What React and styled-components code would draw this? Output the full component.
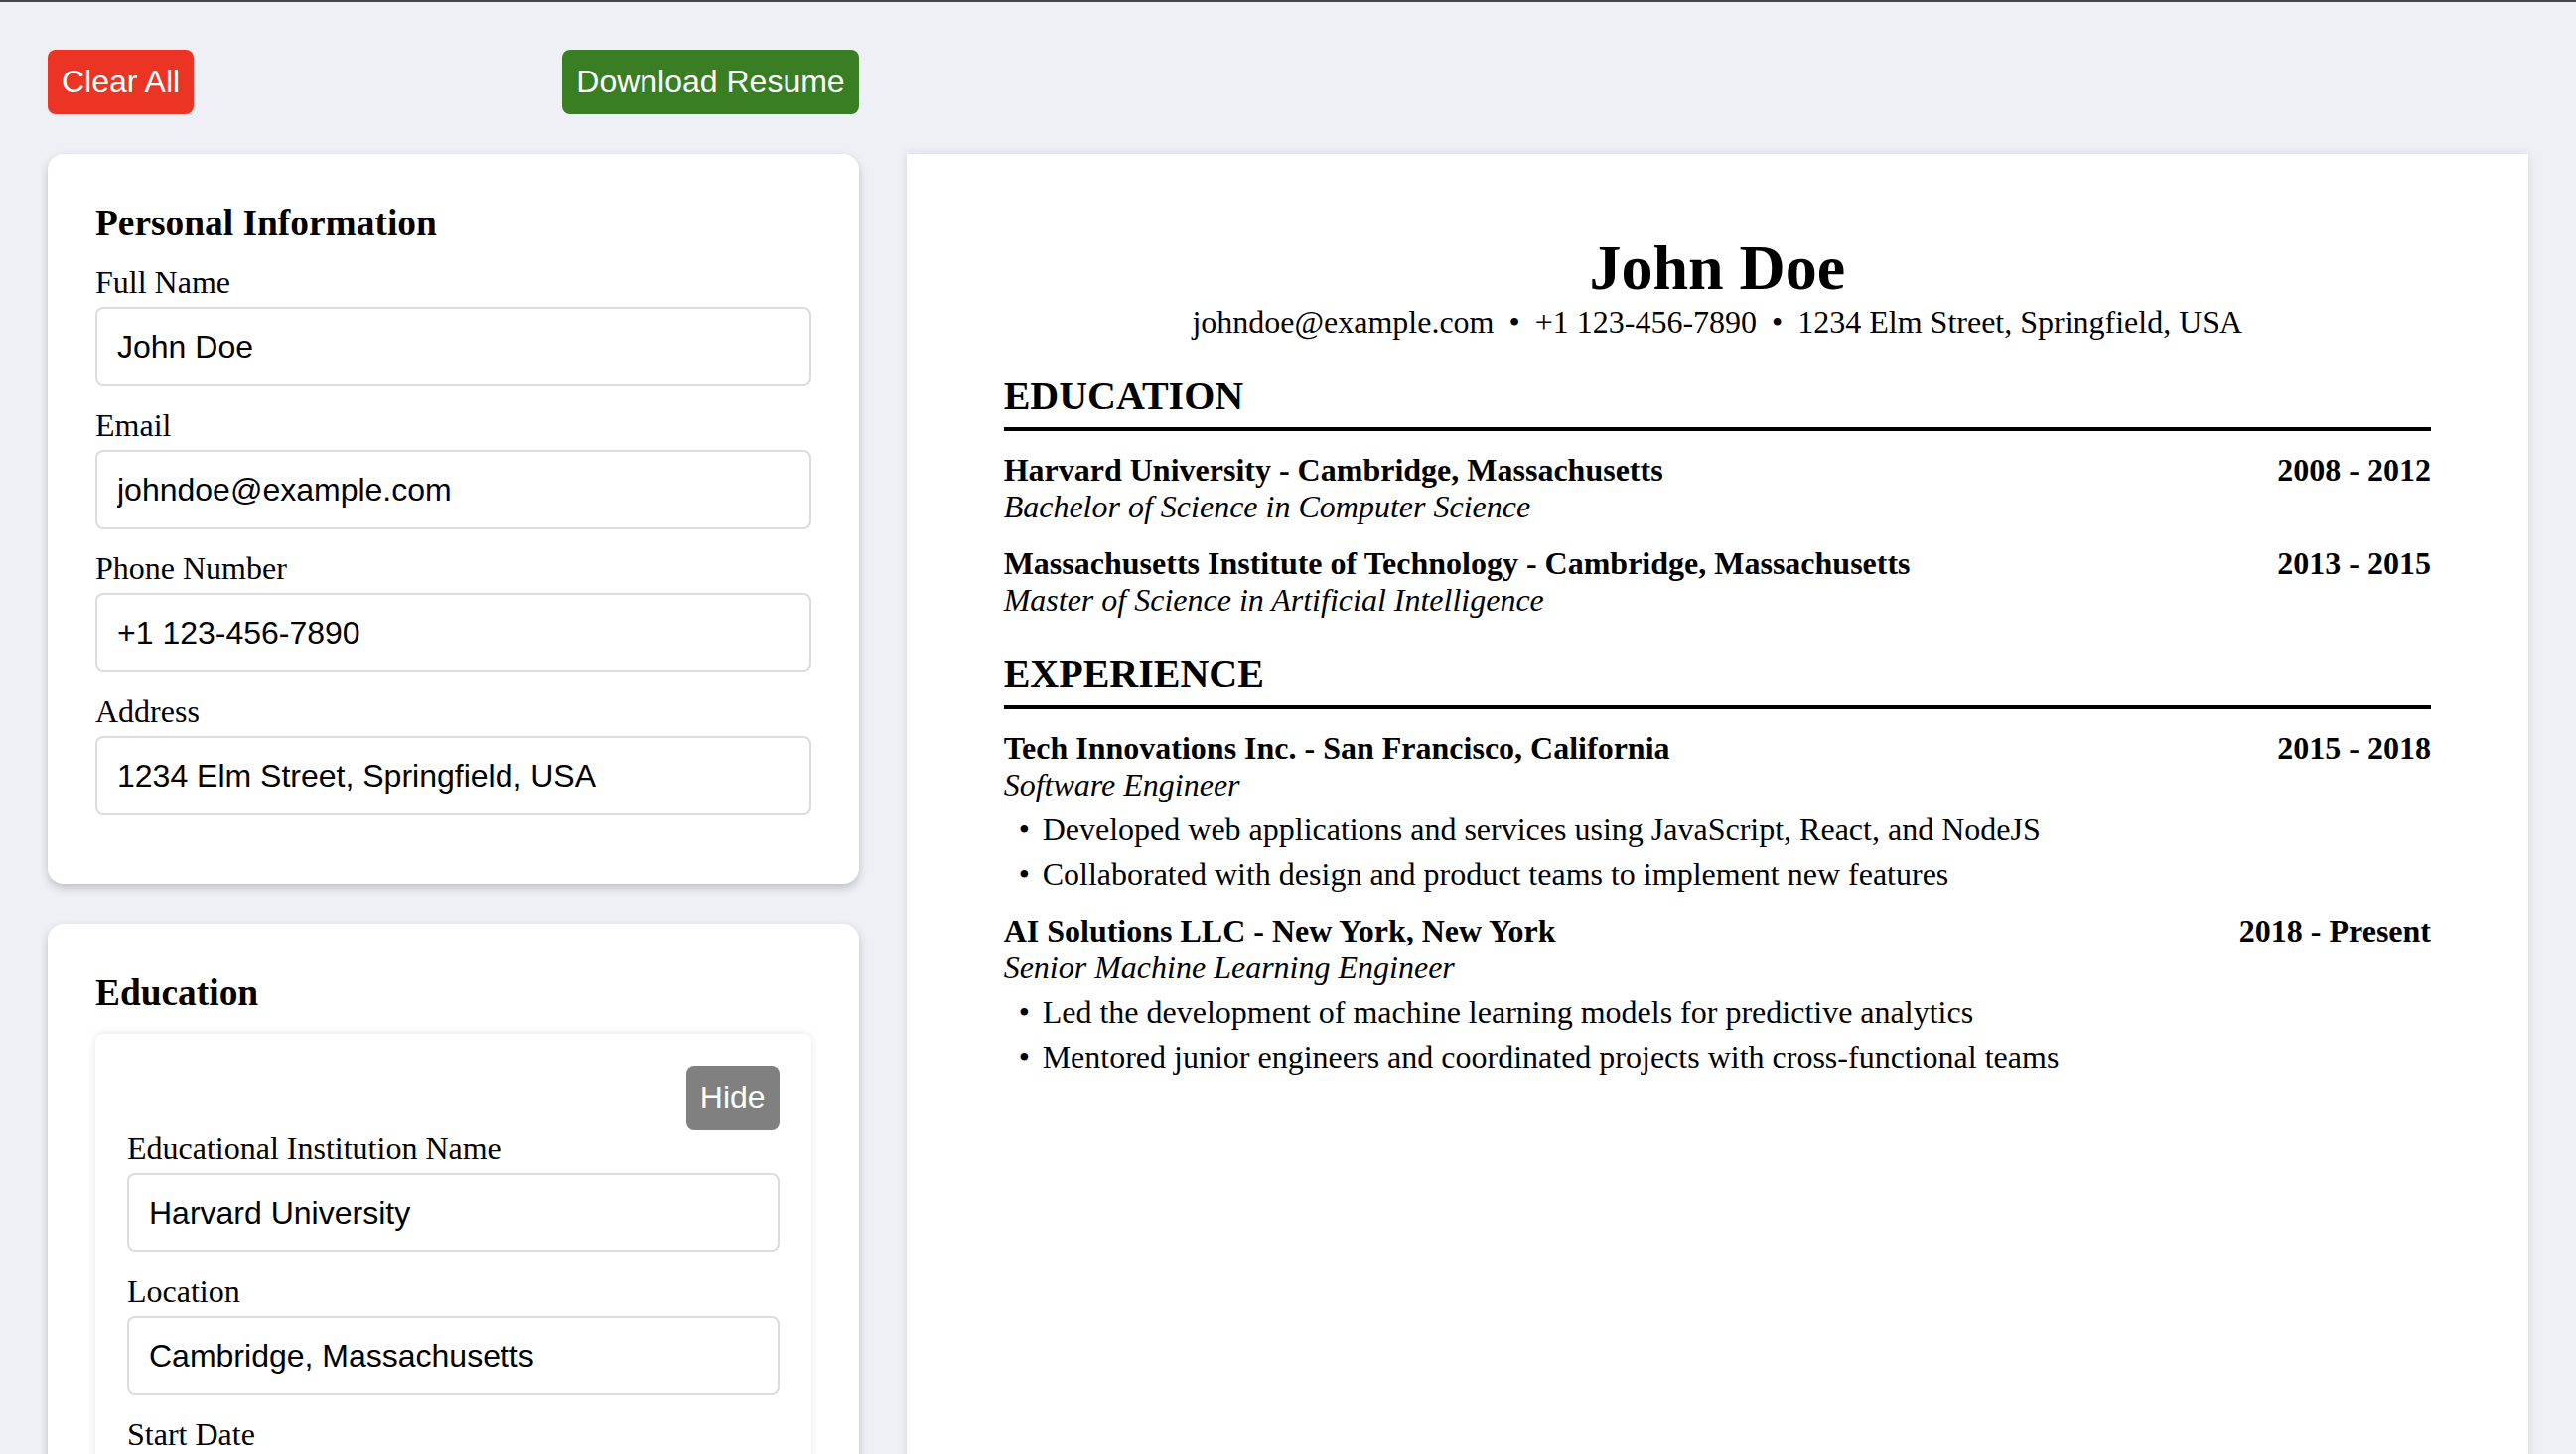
import React, { useState } from "react";
import styled, { createGlobalStyle } from "styled-components";

const GlobalStyle = createGlobalStyle`
  html {
    scrollbar-width: none;
  }
  html::-webkit-scrollbar {
    display: none;
  }
  body {
    margin: 0;
    background: #eff0f5;
    border-top: 2px solid #46474b;
    font-family: "Liberation Serif", "Times New Roman", serif;
    color: #000;
  }
  * {
    box-sizing: border-box;
  }
`;

const Page = styled.div`
  display: grid;
  grid-template-columns: 1fr 2fr;
  column-gap: 48px;
  row-gap: 40px;
  padding: 48px;
  align-items: start;
`;

const Toolbar = styled.div`
  grid-column: 1;
  display: flex;
  justify-content: space-between;
  align-items: center;
`;

const Button = styled.button`
  height: 65px;
  padding: 0 14px;
  border: none;
  border-radius: 8px;
  background: ${(p) => p.$bg};
  color: #fff;
  font-family: "Liberation Sans", Arial, sans-serif;
  font-size: 32px;
  cursor: pointer;
`;

const FormColumn = styled.div`
  grid-column: 1;
  display: flex;
  flex-direction: column;
  gap: 40px;
`;

const Card = styled.section`
  background: #fff;
  border-radius: 16px;
  padding: 48px;
  box-shadow: 0 4px 10px rgba(0, 0, 0, 0.2);
`;

const CardTitle = styled.h3`
  margin: 0 0 20px;
  font-size: 37.4px;
  line-height: 43px;
  font-weight: bold;
`;

const Field = styled.div`
  display: flex;
  flex-direction: column;
  margin-bottom: 21px;
`;

const Label = styled.label`
  font-size: 32px;
  line-height: 37px;
  margin-bottom: 6px;
`;

const Input = styled.input`
  height: 80px;
  width: 100%;
  padding: 0 20px;
  border: 2px solid #dcdcdc;
  border-radius: 8px;
  font-family: "Liberation Sans", Arial, sans-serif;
  font-size: 32px;
  color: #000;
  background: #fff;
  outline: none;
`;

const EntryCard = styled.div`
  background: #fff;
  border-radius: 8px;
  padding: 32px;
  box-shadow: 0 0 10px rgba(0, 0, 0, 0.1);
  margin-bottom: 24px;
`;

const EntryActions = styled.div`
  display: flex;
  justify-content: flex-end;
`;

const Preview = styled.article`
  grid-column: 2;
  background: #fff;
  box-shadow: 0 0 10px rgba(0, 0, 0, 0.1);
  padding: 78px 98px 96px;
  min-height: 2310px;
`;

const Name = styled.h1`
  margin: 0;
  text-align: center;
  font-size: 64px;
  line-height: 73px;
  font-weight: bold;
`;

const Contact = styled.p`
  margin: 0;
  text-align: center;
  font-size: 32px;
  line-height: 37px;
`;

const Dot = styled.span`
  margin: 0 15px;
`;

const Section = styled.section`
  margin-top: 33px;
`;

const SectionTitle = styled.h2`
  margin: 0 0 21px;
  padding-bottom: 8px;
  border-bottom: 4px solid #000;
  font-size: 40px;
  line-height: 46px;
  font-weight: bold;
  text-transform: uppercase;
`;

const Entries = styled.div`
  display: flex;
  flex-direction: column;
  gap: 20px;
`;

const EntryHead = styled.div`
  display: flex;
  justify-content: space-between;
  font-size: 32px;
  line-height: 37px;
  font-weight: bold;
`;

const Subtitle = styled.div`
  font-size: 32px;
  line-height: 37px;
  font-style: italic;
`;

const Bullets = styled.ul`
  list-style: none;
  margin: 8px 0 0;
  padding: 0;
  display: flex;
  flex-direction: column;
  gap: 8px;
`;

const BulletItem = styled.li`
  display: flex;
  font-size: 32px;
  line-height: 37px;
`;

const BulletMark = styled.span`
  flex: none;
  width: 24px;
  margin-left: 15px;
`;

const initial = {
  name: "John Doe",
  email: "johndoe@example.com",
  phone: "+1 123-456-7890",
  address: "1234 Elm Street, Springfield, USA",
  education: [
    {
      school: "Harvard University",
      location: "Cambridge, Massachusetts",
      start: "2008",
      end: "2012",
      degree: "Bachelor of Science in Computer Science",
    },
    {
      school: "Massachusetts Institute of Technology",
      location: "Cambridge, Massachusetts",
      start: "2013",
      end: "2015",
      degree: "Master of Science in Artificial Intelligence",
    },
  ],
  experience: [
    {
      company: "Tech Innovations Inc.",
      location: "San Francisco, California",
      start: "2015",
      end: "2018",
      role: "Software Engineer",
      points: [
        "Developed web applications and services using JavaScript, React, and NodeJS",
        "Collaborated with design and product teams to implement new features",
      ],
    },
    {
      company: "AI Solutions LLC",
      location: "New York, New York",
      start: "2018",
      end: "Present",
      role: "Senior Machine Learning Engineer",
      points: [
        "Led the development of machine learning models for predictive analytics",
        "Mentored junior engineers and coordinated projects with cross-functional teams",
      ],
    },
  ],
};

const empty = {
  name: "",
  email: "",
  phone: "",
  address: "",
  education: [],
  experience: [],
};

function EducationEntry({ entry, onChange }) {
  const [hidden, setHidden] = useState(false);
  const set = (key) => (e) => onChange({ ...entry, [key]: e.target.value });
  return (
    <EntryCard>
      <EntryActions>
        <Button $bg="#808080" onClick={() => setHidden(!hidden)}>
          {hidden ? "Show" : "Hide"}
        </Button>
      </EntryActions>
      {!hidden && (
        <>
          <Field>
            <Label>Educational Institution Name</Label>
            <Input value={entry.school} onChange={set("school")} />
          </Field>
          <Field>
            <Label>Location</Label>
            <Input value={entry.location} onChange={set("location")} />
          </Field>
          <Field>
            <Label>Start Date</Label>
            <Input value={entry.start} onChange={set("start")} />
          </Field>
          <Field>
            <Label>End Date</Label>
            <Input value={entry.end} onChange={set("end")} />
          </Field>
          <Field>
            <Label>Degree</Label>
            <Input value={entry.degree} onChange={set("degree")} />
          </Field>
        </>
      )}
    </EntryCard>
  );
}

export default function App() {
  const [data, setData] = useState(initial);
  const set = (key) => (e) => setData({ ...data, [key]: e.target.value });

  const updateEducation = (i) => (entry) =>
    setData({
      ...data,
      education: data.education.map((ed, j) => (j === i ? entry : ed)),
    });

  const contact = [data.email, data.phone, data.address].filter(Boolean);

  return (
    <>
      <GlobalStyle />
      <Page>
        <Toolbar>
          <Button $bg="#eb3424" onClick={() => setData(empty)}>
            Clear All
          </Button>
          <Button $bg="#397e23" onClick={() => window.print()}>
            Download Resume
          </Button>
        </Toolbar>

        <FormColumn>
          <Card>
            <CardTitle>Personal Information</CardTitle>
            <Field>
              <Label>Full Name</Label>
              <Input value={data.name} onChange={set("name")} />
            </Field>
            <Field>
              <Label>Email</Label>
              <Input value={data.email} onChange={set("email")} />
            </Field>
            <Field>
              <Label>Phone Number</Label>
              <Input value={data.phone} onChange={set("phone")} />
            </Field>
            <Field>
              <Label>Address</Label>
              <Input value={data.address} onChange={set("address")} />
            </Field>
          </Card>

          <Card>
            <CardTitle>Education</CardTitle>
            {data.education.map((entry, i) => (
              <EducationEntry key={i} entry={entry} onChange={updateEducation(i)} />
            ))}
          </Card>
        </FormColumn>

        <Preview>
          <Name>{data.name}</Name>
          <Contact>
            {contact.map((item, i) => (
              <React.Fragment key={i}>
                {i > 0 && <Dot>•</Dot>}
                {item}
              </React.Fragment>
            ))}
          </Contact>

          <Section>
            <SectionTitle>Education</SectionTitle>
            <Entries>
              {data.education.map((ed, i) => (
                <div key={i}>
                  <EntryHead>
                    <span>
                      {ed.school} - {ed.location}
                    </span>
                    <span>
                      {ed.start} - {ed.end}
                    </span>
                  </EntryHead>
                  <Subtitle>{ed.degree}</Subtitle>
                </div>
              ))}
            </Entries>
          </Section>

          <Section>
            <SectionTitle>Experience</SectionTitle>
            <Entries>
              {data.experience.map((job, i) => (
                <div key={i}>
                  <EntryHead>
                    <span>
                      {job.company} - {job.location}
                    </span>
                    <span>
                      {job.start} - {job.end}
                    </span>
                  </EntryHead>
                  <Subtitle>{job.role}</Subtitle>
                  <Bullets>
                    {job.points.map((p, k) => (
                      <BulletItem key={k}>
                        <BulletMark>•</BulletMark>
                        {p}
                      </BulletItem>
                    ))}
                  </Bullets>
                </div>
              ))}
            </Entries>
          </Section>
        </Preview>
      </Page>
    </>
  );
}
